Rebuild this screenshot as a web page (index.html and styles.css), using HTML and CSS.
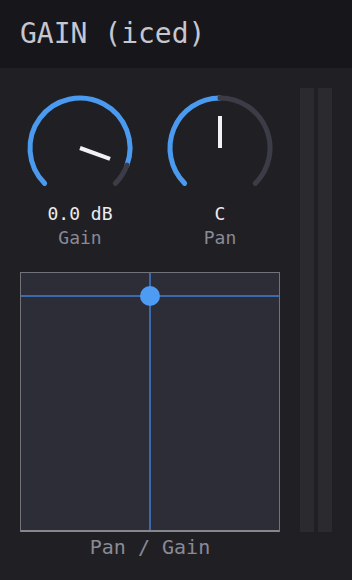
FILE: index.html
```
<html>
<head>
  <link rel="stylesheet" href="styles.css">
</head>
<body>
  <div class="header"><span class="title">GAIN (iced)</span></div>
  <div class="main">
    <div class="left">
      <div class="knobs">
        <div class="knob">
          <svg width="120" height="114" viewBox="0 0 120 114">
            <path d="M 24.64 95.36 A 50 50 0 1 1 106.98 77.10" class="arc-on"/>
            <path d="M 106.98 77.10 A 50 50 0 0 1 95.36 95.36" class="arc-off"/>
            <line x1="60" y1="60" x2="90.07" y2="70.94" class="needle"/>
          </svg>
          <div class="value">0.0 dB</div>
          <div class="label">Gain</div>
        </div>
        <div class="knob">
          <svg width="120" height="114" viewBox="0 0 120 114">
            <path d="M 24.64 95.36 A 50 50 0 0 1 60 10" class="arc-on"/>
            <path d="M 60 10 A 50 50 0 0 1 95.36 95.36" class="arc-off"/>
            <line x1="60" y1="60" x2="60" y2="28" class="needle"/>
          </svg>
          <div class="value">C</div>
          <div class="label">Pan</div>
        </div>
      </div>
      <div class="pad">
        <div class="vline" style="left: 50%"></div>
        <div class="hline" style="top: 23px"></div>
        <div class="dot" style="left: 50%; top: 23px"></div>
      </div>
      <div class="pad-label">Pan / Gain</div>
    </div>
    <div class="meters">
      <div class="meter"></div>
      <div class="meter"></div>
    </div>
  </div>
</body>
</html>
```
FILE: styles.css
```
body{
    margin: 0;
    background: #202024;
    font-family: "DejaVu Sans Mono", "Liberation Mono", monospace;
    width: 352px;
    height: 580px;
    overflow: hidden;
}
.header{
    height: 68px;
    background: #17161b;
    display: flex;
    align-items: center;
    padding: 0 20px;
}
.title{
    font-size: 28px;
    color: #c6c6d0;
    margin-top: -2px;
}
.main{
    display: flex;
    gap: 20px;
    padding: 20px 20px 0 20px;
}
.left{
    width: 260px;
}
.knobs{
    display: flex;
    gap: 20px;
}
.knob{
    width: 120px;
    text-align: center;
}
.knob svg{
    display: block;
}
.arc-on{
    fill: none;
    stroke: #4a9bf0;
    stroke-width: 5;
    stroke-linecap: round;
}
.arc-off{
    fill: none;
    stroke: #3c3c47;
    stroke-width: 5;
    stroke-linecap: round;
}
.needle{
    stroke: #f2f2f5;
    stroke-width: 4;
}
.value{
    font-size: 18px;
    line-height: 24px;
    color: #ececf0;
}
.label{
    font-size: 18px;
    line-height: 24px;
    color: #8a8a95;
}
.pad{
    position: relative;
    margin-top: 22px;
    height: 257px;
    background: #2d2d37;
    border: 1px solid #72727a;
    border-bottom: 2px solid #86868c;
    overflow: hidden;
}
.vline{
    position: absolute;
    top: 0;
    bottom: 0;
    width: 2px;
    margin-left: -1px;
    background: #3b69ab;
}
.hline{
    position: absolute;
    left: 0;
    right: 0;
    height: 2px;
    margin-top: -1px;
    background: #3b69ab;
}
.dot{
    position: absolute;
    width: 20px;
    height: 20px;
    margin: -10px 0 0 -10px;
    border-radius: 50%;
    background: #4d9bf2;
}
.pad-label{
    text-align: center;
    font-size: 20px;
    line-height: 24px;
    margin-top: 3px;
    color: #8a8a95;
}
.meters{
    display: flex;
    gap: 4px;
}
.meter{
    width: 14px;
    height: 444px;
    background: #2a2a2f;
}
```
